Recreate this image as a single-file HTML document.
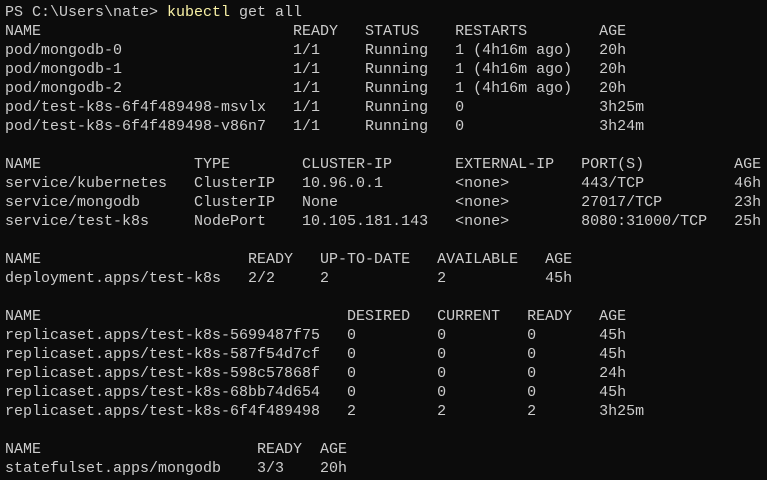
<!DOCTYPE html>
<html><head><meta charset="utf-8"><style>
html,body{margin:0;padding:0;background:#0c0c0c;width:767px;height:480px;overflow:hidden}
pre{margin:0;padding:3px 0 0 5px;font-family:"Liberation Mono",monospace;font-size:15px;line-height:19px;color:#cccccc;white-space:pre}
.y{color:#f9f1a5}
</style></head><body><pre>PS C:\Users\nate&gt; <span class="y">kubectl</span> get all
NAME                            READY   STATUS    RESTARTS        AGE
pod/mongodb-0                   1/1     Running   1 (4h16m ago)   20h
pod/mongodb-1                   1/1     Running   1 (4h16m ago)   20h
pod/mongodb-2                   1/1     Running   1 (4h16m ago)   20h
pod/test-k8s-6f4f489498-msvlx   1/1     Running   0               3h25m
pod/test-k8s-6f4f489498-v86n7   1/1     Running   0               3h24m

NAME                 TYPE        CLUSTER-IP       EXTERNAL-IP   PORT(S)          AGE
service/kubernetes   ClusterIP   10.96.0.1        &lt;none&gt;        443/TCP          46h
service/mongodb      ClusterIP   None             &lt;none&gt;        27017/TCP        23h
service/test-k8s     NodePort    10.105.181.143   &lt;none&gt;        8080:31000/TCP   25h

NAME                       READY   UP-TO-DATE   AVAILABLE   AGE
deployment.apps/test-k8s   2/2     2            2           45h

NAME                                  DESIRED   CURRENT   READY   AGE
replicaset.apps/test-k8s-5699487f75   0         0         0       45h
replicaset.apps/test-k8s-587f54d7cf   0         0         0       45h
replicaset.apps/test-k8s-598c57868f   0         0         0       24h
replicaset.apps/test-k8s-68bb74d654   0         0         0       45h
replicaset.apps/test-k8s-6f4f489498   2         2         2       3h25m

NAME                        READY  AGE
statefulset.apps/mongodb    3/3    20h</pre></body></html>
